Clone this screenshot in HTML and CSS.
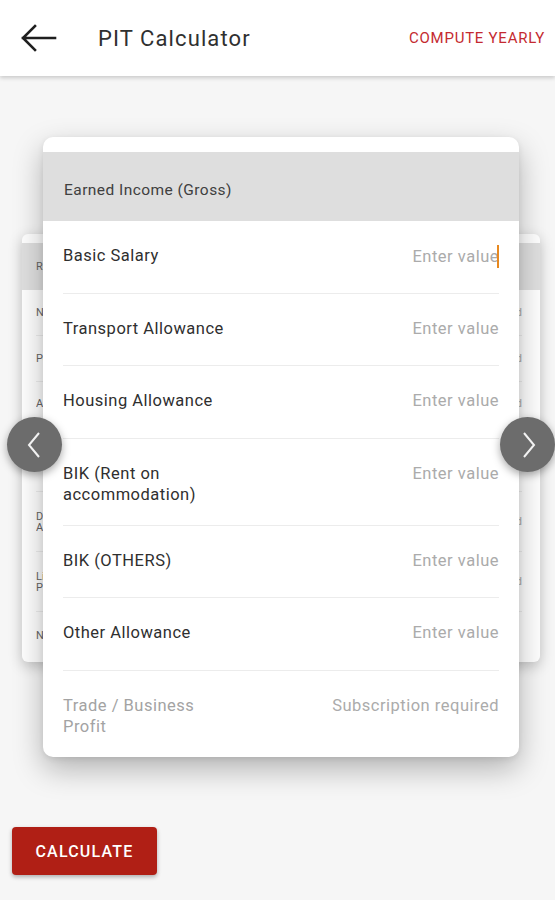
FILE: index.html
```html
<!DOCTYPE html>
<html>
<head>
<meta charset="utf-8">
<link rel="stylesheet" href="styles.css">
</head>
<body>
<header class="appbar">
  <svg class="back" width="36" height="28" viewBox="0 0 36 28"><path d="M2 14H34M14 2L2 14L14 26" fill="none" stroke="#1f1f1f" stroke-width="2.6" stroke-linecap="square"/></svg>
  <div class="title">PIT Calculator</div>
  <div class="action">COMPUTE YEARLY</div>
</header>

<main class="content">
  <section class="carousel">
    <div class="card back-card">
      <div class="back-head"><span class="bl">Reliefs</span></div>
      <div class="back-row"><span class="bl">NHF</span><span class="bv"><span>Not required</span></span></div>
      <div class="back-row"><span class="bl">Pension</span><span class="bv"><span>Not required</span></span></div>
      <div class="back-row tall"><span class="bl">Assurance</span><span class="bv"><span>Not required</span></span></div>
      <div class="back-row tall2"><span class="bl">Development<br>Allowance</span><span class="bv"><span>Not required</span></span></div>
      <div class="back-row tall2"><span class="bl">Life<br>Premium</span><span class="bv"><span>Not required</span></span></div>
      <div class="back-row"><span class="bl">NHIS</span><span class="bv"></span></div>
    </div>

    <div class="card front-card">
      <div class="front-head">Earned Income (Gross)</div>
      <div class="row"><span class="label">Basic Salary</span><span class="value">Enter value<i class="cursor"></i></span></div>
      <div class="row"><span class="label">Transport Allowance</span><span class="value">Enter value</span></div>
      <div class="row"><span class="label">Housing Allowance</span><span class="value">Enter value</span></div>
      <div class="row"><span class="label">BIK (Rent on accommodation)</span><span class="value">Enter value</span></div>
      <div class="row"><span class="label">BIK (OTHERS)</span><span class="value">Enter value</span></div>
      <div class="row"><span class="label">Other Allowance</span><span class="value">Enter value</span></div>
      <div class="row disabled"><span class="label">Trade / Business Profit</span><span class="value">Subscription required</span></div>
    </div>

    <button class="nav nav-left" aria-label="Previous"><svg width="14" height="26" viewBox="0 0 14 26"><path d="M12 1L2 13L12 25" fill="none" stroke="#f2f2f2" stroke-width="2"/></svg></button>
    <button class="nav nav-right" aria-label="Next"><svg width="14" height="26" viewBox="0 0 14 26"><path d="M2 1L12 13L2 25" fill="none" stroke="#f2f2f2" stroke-width="2"/></svg></button>
  </section>

  <div class="actions">
    <button class="calc">CALCULATE</button>
  </div>
</main>
</body>
</html>
```

FILE: styles.css
```css
* { box-sizing: border-box; }
html, body { margin: 0; padding: 0; }
body {
  width: 555px;
  height: 900px;
  overflow: hidden;
  background: #f6f6f6;
  font-family: Roboto, "Liberation Sans", sans-serif;
  color: #333;
}

.appbar {
  height: 76px;
  background: #fff;
  display: flex;
  align-items: center;
  padding: 0 10px 0 21px;
  box-shadow: 0 2px 4px rgba(0,0,0,0.18);
  position: relative;
  z-index: 2;
}
.back { flex: none; }
.title {
  margin-left: 41px;
  font-size: 22px;
  color: #303030;
  letter-spacing: 1.1px;
}
.action {
  margin-left: auto;
  font-size: 15px;
  color: #c42a30;
  letter-spacing: 0.75px;
}

.content { padding: 0; }

.carousel {
  display: grid;
  position: relative;
}
.carousel > .card { grid-area: 1 / 1; align-self: start; }

.card {
  background: #fff;
  overflow: hidden;
}

.back-card {
  margin: 158px 0 0 22px;
  width: 518px;
  border-radius: 6px;
  padding-top: 9px;
  padding-bottom: 4px;
  box-shadow: 0 4px 14px rgba(0,0,0,0.22);
  font-size: 11px;
  color: #666;
}
.back-head {
  height: 47px;
  background: #e0e0e0;
  display: flex;
  align-items: center;
  padding-left: 14px;
}
.back-row {
  display: flex;
  justify-content: space-between;
  align-items: center;
  height: 46px;
  margin: 0 18px 0 14px;
  border-bottom: 1px solid #eee;
  line-height: 11px;
}
.back-row.tall { height: 110px; align-items: flex-start; padding-top: 16px; }
.back-row.tall2 { height: 60px; }
.back-row:last-child { border-bottom: none; }
.bl {
  display: block;
  width: 8px;
  overflow: hidden;
  white-space: nowrap;
}
.bv {
  display: flex;
  justify-content: flex-end;
  width: 8px;
  overflow: hidden;
  white-space: nowrap;
  color: #aaa;
}
.bv > span { flex: none; }

.front-card {
  margin: 61px 0 0 43px;
  width: 476px;
  border-radius: 10px;
  padding-top: 15px;
  box-shadow: 0 12px 30px rgba(0,0,0,0.28), 0 2px 6px rgba(0,0,0,0.08);
  position: relative;
}
.front-head {
  height: 69px;
  background: #dedede;
  display: flex;
  align-items: center;
  padding: 6px 0 0 21px;
  font-size: 15.5px;
  letter-spacing: 0.45px;
  color: #404040;
}
.row {
  display: flex;
  justify-content: space-between;
  align-items: flex-start;
  min-height: 72.5px;
  margin: 0 20px;
  padding: 24px 0 20px;
  border-bottom: 1.5px solid #ececec;
  font-size: 16.5px;
  letter-spacing: 0.5px;
  line-height: 21px;
}
.row:last-child { border-bottom: none; }
.label { max-width: 172px; color: #2f2f2f; }
.value { color: #ababab; white-space: nowrap; }
.disabled .label { color: #a3a3a3; }
.cursor {
  display: inline-block;
  width: 2px;
  height: 23px;
  margin-left: -2px;
  vertical-align: -6px;
  background: #e8891f;
}

.nav {
  position: absolute;
  top: 341px;
  width: 55px;
  height: 55px;
  border-radius: 50%;
  border: none;
  background: #6c6c6c;
  box-shadow: 0 3px 8px rgba(0,0,0,0.35);
  display: flex;
  align-items: center;
  justify-content: center;
  padding: 0;
  z-index: 3;
}
.nav-left { left: 7px; }
.nav-left svg { margin-left: -2px; }
.nav-right { left: 500px; }
.nav-right svg { margin-left: 2px; }

.actions { padding: 70px 0 0 12px; }
.calc {
  width: 145px;
  height: 48px;
  border: none;
  border-radius: 4px;
  background: #b01f15;
  color: #fff;
  font-family: Roboto, "Liberation Sans", sans-serif;
  font-weight: 500;
  font-size: 16px;
  letter-spacing: 1.2px;
  box-shadow: 0 2px 4px rgba(0,0,0,0.3);
  padding: 2px 0 0;
}
```
